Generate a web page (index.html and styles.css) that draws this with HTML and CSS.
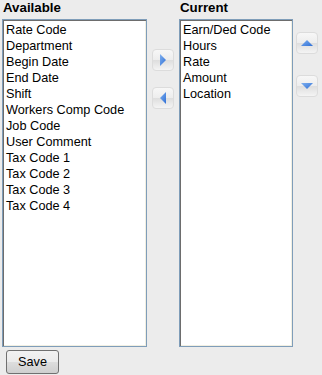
FILE: index.html
```html
<!DOCTYPE html>
<html lang="en">
<head>
    <meta charset="UTF-8">
    <title>Columns</title>
    <link rel="stylesheet" href="styles.css">
</head>
<body>
    <div class="picker">
        <!-- Available columns -->
        <div class="column column-left">
            <div class="label">Available</div>
            <div class="listbox">
                <div class="item">Rate Code</div>
                <div class="item">Department</div>
                <div class="item">Begin Date</div>
                <div class="item">End Date</div>
                <div class="item">Shift</div>
                <div class="item">Workers Comp Code</div>
                <div class="item">Job Code</div>
                <div class="item">User Comment</div>
                <div class="item">Tax Code 1</div>
                <div class="item">Tax Code 2</div>
                <div class="item">Tax Code 3</div>
                <div class="item">Tax Code 4</div>
            </div>
        </div>

        <!-- Move buttons -->
        <div class="moves">
            <button class="arrow-btn" title="Add">
                <svg width="8" height="12" viewBox="0 0 8 12"><path d="M1 0 L7 6 L1 12 Z" fill="url(#blue)"/></svg>
            </button>
            <button class="arrow-btn" title="Remove">
                <svg width="8" height="12" viewBox="0 0 8 12"><path d="M7 0 L1 6 L7 12 Z" fill="url(#blue)"/></svg>
            </button>
        </div>

        <!-- Current columns -->
        <div class="column column-right">
            <div class="label">Current</div>
            <div class="listbox">
                <div class="item">Earn/Ded Code</div>
                <div class="item">Hours</div>
                <div class="item">Rate</div>
                <div class="item">Amount</div>
                <div class="item">Location</div>
            </div>
        </div>

        <!-- Order buttons -->
        <div class="orders">
            <button class="arrow-btn" title="Move up">
                <svg width="12" height="8" viewBox="0 0 12 8"><path d="M0 7 L6 1 L12 7 Z" fill="url(#blue)"/></svg>
            </button>
            <button class="arrow-btn" title="Move down">
                <svg width="12" height="8" viewBox="0 0 12 8"><path d="M0 1 L6 7 L12 1 Z" fill="url(#blue)"/></svg>
            </button>
        </div>
    </div>

    <button class="save-btn">Save</button>

    <svg width="0" height="0" class="defs">
        <defs>
            <linearGradient id="blue" x1="0" y1="0" x2="1" y2="1">
                <stop offset="0" stop-color="#7fb0ef"/>
                <stop offset="1" stop-color="#2f6fd6"/>
            </linearGradient>
        </defs>
    </svg>
</body>
</html>
```

FILE: styles.css
```css
/* General styling */
body, html {
    margin: 0;
    padding: 0;
    background: #ececec;
    font-family: "Liberation Sans", Arial, sans-serif;
    font-size: 12.7px;
    color: #000;
}

.picker {
    display: flex;
    padding: 1px 0 0 2px;
}

.label {
    font-weight: bold;
    font-size: 13.3px;
    height: 18px;
    line-height: 14px;
    padding-left: 1px;
}

.listbox {
    height: 322px;
    background: #fff;
    border: 1px solid #7f9db9;
    box-shadow: inset 1px 1px 0 #6d6d6d, inset -1px -1px 0 #f1efe2;
    padding: 2px 3px;
}

.column-left .listbox {
    width: 137px;
}

.column-right .listbox {
    width: 106px;
}

.item {
    height: 16px;
    line-height: 16px;
    white-space: nowrap;
}

.moves {
    display: flex;
    flex-direction: column;
    gap: 16px;
    padding: 48px 5px 0 5px;
}

.orders {
    display: flex;
    flex-direction: column;
    gap: 21px;
    padding: 31px 0 0 3px;
}

.arrow-btn {
    width: 22px;
    height: 22px;
    padding: 0;
    border: 1px solid #dcdcdc;
    border-radius: 4px;
    background: linear-gradient(#f7f7f7 0%, #ededed 50%, #dedede 52%, #f4f4f4 100%);
    display: flex;
    align-items: center;
    justify-content: center;
}

.save-btn {
    display: block;
    margin: 3px 0 0 6px;
    width: 53px;
    height: 24px;
    padding: 0;
    border: 1px solid #707070;
    border-radius: 3px;
    background: linear-gradient(#f2f2f2 0%, #ebebeb 50%, #dddddd 52%, #cfcfcf 100%);
    font-family: "Liberation Sans", Arial, sans-serif;
    font-size: 12.7px;
    color: #000;
}

.defs {
    position: absolute;
}
```
